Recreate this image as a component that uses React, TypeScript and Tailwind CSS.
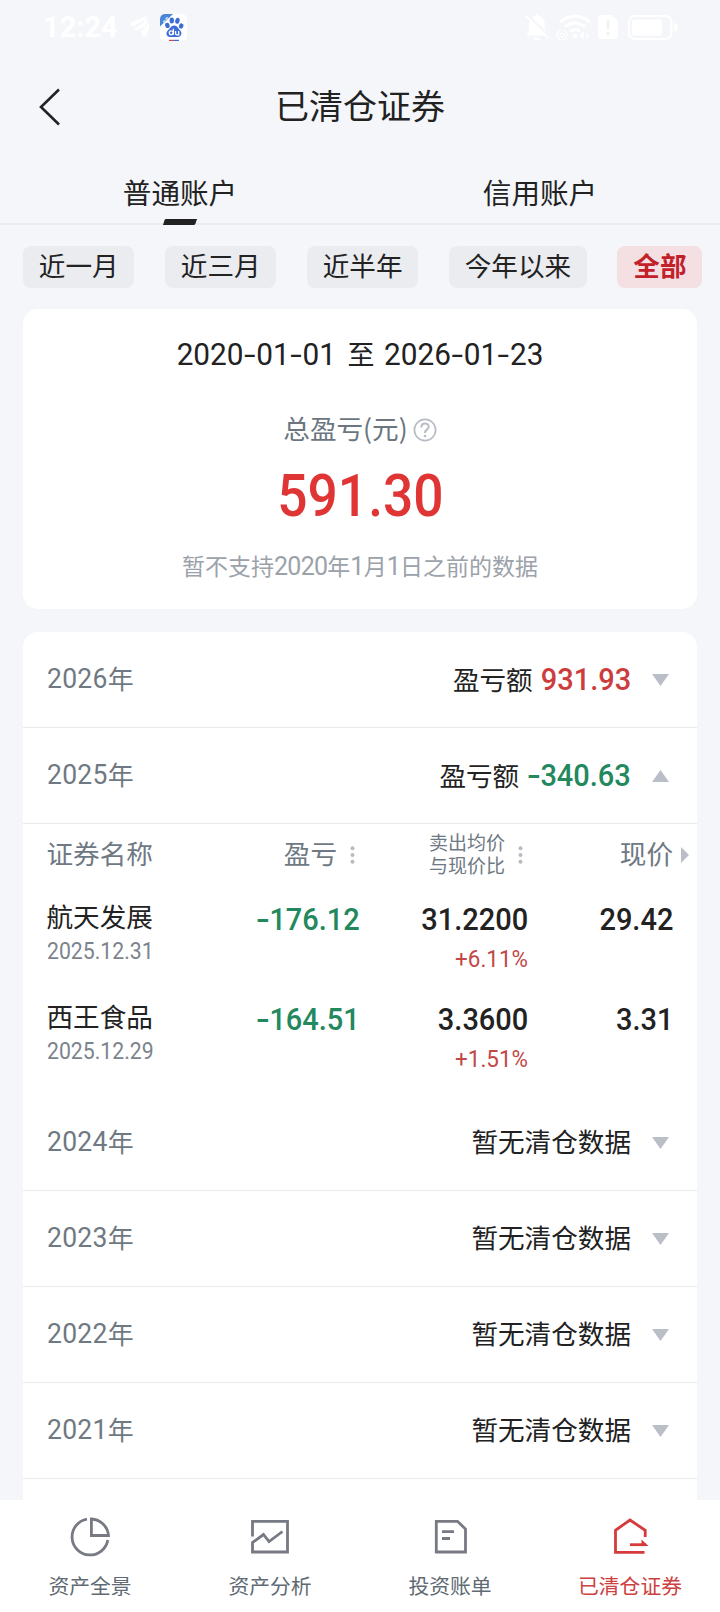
import React from "react";
import clsx from "clsx";

const CJK = "font-['Noto_Sans_CJK_SC',sans-serif]";
const DIN = "font-[Roboto,'Noto_Sans_CJK_SC',sans-serif]";

/** Condensed figures with a widened hyphen. */
function Num({ value, className }: { value: string; className?: string }) {
  return (
    <span className={clsx(DIN, "inline-block whitespace-nowrap", className)}>
      {value.split(/(-)/).map((part, i) =>
        part === "-" ? (
          <span key={i} className="inline-block w-[0.43em] text-center">
            <span className="inline-block scale-x-[1.4]">-</span>
          </span>
        ) : (
          part
        ),
      )}
    </span>
  );
}

function BaiduIcon() {
  return (
    <svg width="27" height="27" viewBox="0 0 27 27">
      <defs>
        <clipPath id="app">
          <rect width="27" height="27" rx="5" />
        </clipPath>
      </defs>
      <g clipPath="url(#app)">
        <rect width="27" height="27" fill="#fff" />
        <path d="M0 0H13L0 12.5Z" fill="#4a86d8" />
        <path d="M3.2 8.2l2-2M5.6 5.4l2-2" stroke="#cfe0f8" strokeWidth="1.6" />
        <g fill="#3b6cd8">
          <ellipse cx="11.8" cy="6.6" rx="2.2" ry="3" />
          <ellipse cx="17.4" cy="6.8" rx="2.2" ry="3" transform="rotate(12 17.4 6.8)" />
          <ellipse cx="7.4" cy="11.4" rx="2.2" ry="2.7" transform="rotate(-20 7.4 11.4)" />
          <ellipse cx="21.2" cy="12" rx="2.2" ry="2.7" transform="rotate(15 21.2 12)" />
          <path d="M14.2 11.6c3 0 4 3 6 5 2.400 2.400 1 6.400-2.200 6.400H10c-3.600 0-4.600-4.200-2.200-6.400 2.200-2 3.400-5 6.400-5Z" />
        </g>
        <g fill="none" stroke="#fff" strokeWidth="1.3">
          <circle cx="11.2" cy="18.800" r="1.900" />
          <path d="M13.400 14.800v6M15.600 17v2.600q0 1.200 1.200 1.200h1.900V17" />
        </g>
        <rect x="9" y="25.800" width="5" height="1.200" fill="#d0494f" />
        <rect x="14" y="25.800" width="5" height="1.200" fill="#3b6cd8" />
      </g>
    </svg>
  );
}

function StatusBar() {
  return (
    <div className="flex h-[54px] items-center pl-[43px] pr-[41px] text-white">
      <span className="w-[77px] whitespace-nowrap font-[Roboto,sans-serif] text-[29px] font-bold leading-none">12:24</span>
      <svg className="ml-[10px]" width="20" height="22" viewBox="0 0 20 22" fill="currentColor">
        <path d="M0 8C5 3 10 4 15 0C16.500 2 14 5 11 6C8 7.500 4 11 1 10Z" />
        <path d="M4 12.500C10 10 15 7 16 1C18.500 5 17 9.500 13 11.500C11 13 8 14 5.500 14.500Z" />
        <path d="M10 15.500C14 13.500 18 10 18 5C21 12 17 20 12.500 21.500C13 19 12 17 10 15.500Z" />
      </svg>
      <div className="ml-[10px]">
        <BaiduIcon />
      </div>
      <div className="ml-auto flex items-center">
        <svg width="24" height="27" viewBox="0 0 24 27">
          <path d="M12 0c1.500 0 2 1 2 2 4 1 5.800 4.500 5.800 8v6l3 5.500H1.200l3-5.500v-6c0-3.500 2-7 5.800-8 0-1 .5-2 2-2ZM9 24h5.500c0 3.500-5.500 3.500-5.500 0Z" fill="#fff" />
          <path d="M2 0L25 23" stroke="#f5f6fa" strokeWidth="2" />
          <path d="M.5 1.500L23 24" stroke="#fff" strokeWidth="1.800" />
        </svg>
        <svg className="ml-[7px]" width="35" height="27" viewBox="0 0 35 27" fill="none" stroke="#fff">
          <path d="M4 8.500C12 0 26 0 34 8.500" strokeWidth="3" />
          <path d="M9 13C15 7.500 23 7.500 29 13" strokeWidth="3" />
          <path d="M14 17.500C17 15 21 15 24 17.500" strokeWidth="3" />
          <circle cx="6" cy="21" r="5" strokeWidth="1.200" />
          <circle cx="6" cy="21" r="2" strokeWidth="1.200" />
          <circle cx="19" cy="22" r="2.400" fill="#fff" stroke="none" />
          <path d="M23 21.500l5-4v8Z" fill="#fff" stroke="none" />
          <path d="M30 17.500v8l4-4Z" fill="#fff" fillOpacity=".5" stroke="none" />
        </svg>
        <svg className="ml-[7px]" width="20" height="24" viewBox="0 0 20 24">
          <path d="M3.500 0H14l6 6v14.500a3.500 3.500 0 0 1-3.500 3.500h-13A3.500 3.500 0 0 1 0 20.500v-17A3.500 3.500 0 0 1 3.500 0Z" fill="#fff" />
          <path d="M10 5v9M10 17v3" stroke="#f0f1f5" strokeWidth="2.600" />
        </svg>
        <svg className="ml-[10px] mr-px" width="50" height="25" viewBox="0 0 50 25">
          <rect x="1" y="1" width="42.500" height="23" rx="6" fill="none" stroke="#fff" strokeWidth="2" />
          <rect x="4" y="4.500" width="30" height="16" rx="3" fill="#fff" />
          <path d="M46 8.500q4 0 4 4t-4 4Z" fill="#fff" />
        </svg>
      </div>
    </div>
  );
}

function Header() {
  return (
    <header className="relative flex h-[104px] items-center justify-center pb-0.5">
      <svg className="absolute left-[39px] top-[34px]" width="22" height="38" viewBox="0 0 22 38" fill="none" stroke="#222" strokeWidth="2.600">
        <path d="M20 1.500L2 19L20 36.500" />
      </svg>
      <h1 className="text-[34px] leading-none text-[#222]">已清仓证券</h1>
    </header>
  );
}

function Tabs() {
  return (
    <div className="relative flex h-[67px] border-b-2 border-[#ebecf0] text-[28.600px] leading-none text-[#222]">
      <div className="flex flex-1 justify-center pt-5">普通账户</div>
      <div className="flex flex-1 justify-center pt-5">信用账户</div>
      <svg className="absolute left-[163px] top-[61px]" width="34" height="6" viewBox="0 0 34 6">
        <path d="M3 0H34L32.500 4.500Q32 6 30.500 6H0L1.500 1.300Q2 0 3 0Z" fill="#222" />
      </svg>
    </div>
  );
}

const periods = ["近一月", "近三月", "近半年", "今年以来", "全部"];

function Periods() {
  return (
    <div className="mt-[21px] flex gap-[30.500px] pl-[23px]">
      {periods.map((p) => (
        <div
          key={p}
          className={clsx(
            "flex h-[42px] items-center whitespace-nowrap rounded-lg px-[15.850px] pb-1 text-[26.600px] leading-none",
            p === "全部" ? "bg-[#f4dfe2] font-bold text-[#c3212a]" : "bg-[#ebecf0] text-[#222]",
          )}
        >
          {p}
        </div>
      ))}
    </div>
  );
}

function Summary() {
  return (
    <section className="mx-[23px] mt-[21px] flex h-[300px] flex-col items-center rounded-[15px] bg-white">
      <div className="mt-[29px] flex h-8 items-center text-[27px] leading-none text-[#222]">
        <Num value="2020-01-01" className="origin-right scale-x-[0.96] text-[31px]" />
        <span className="-mt-0.5 ml-[11px] mr-[9px]">至</span>
        <Num value="2026-01-23" className="origin-left scale-x-[0.96] text-[31px]" />
      </div>
      <div className="mt-[42px] flex h-8 items-center text-[26.600px] leading-none text-[#6b7680]">
        总盈亏(元)
        <svg className="ml-[5px] mt-[3px]" width="24" height="24" viewBox="0 0 24 24" fill="none" stroke="#b7bcc4" strokeWidth="1.700">
          <circle cx="12" cy="12" r="10.600" />
          <path d="M8.300 9.400C8.300 4 15.800 4.400 15.700 9C15.600 11.500 12 11.400 12 15" strokeWidth="2" />
          <circle cx="12" cy="18" r="1.300" fill="#b7bcc4" stroke="none" />
        </svg>
      </div>
      <Num value="591.30" className="mt-[22px] scale-x-[0.91] text-[58.600px] font-medium leading-[60px] text-[#df3535]" />
      <div className="mt-[23px] flex h-8 items-center text-[23px] leading-none text-[#9ba2aa]">
        暂不支持
        <Num value="2020" className="mt-0.5 text-[25px] tracking-[-0.700px]" />年<Num value="1" className="mt-0.5 text-[25px] tracking-[-0.700px]" />月
        <Num value="1" className="mt-0.5 text-[25px] tracking-[-0.700px]" />日之前的数据
      </div>
    </section>
  );
}

function Caret({ up }: { up?: boolean }) {
  return (
    <svg className="ml-[21px] mr-[28px]" width="17" height="12" viewBox="0 0 17 12" fill="#b9bec7">
      {up ? <path d="M8.500 0L17 12H0Z" /> : <path d="M0 0H17L8.500 12Z" />}
    </svg>
  );
}

const figure = "scale-x-[0.92] text-[31.500px] font-medium";

function YearRow({ year, amount }: { year: string; amount?: string }) {
  const loss = amount?.startsWith("-");
  return (
    <div className="flex h-24 shrink-0 items-center border-b border-[#e9eaec] pl-[23.500px] leading-none">
      <div className="flex items-center text-[26px] text-[#6f7983]">
        <Num value={year} className="origin-left scale-x-[0.93] text-[28.500px] tracking-[0.300px]" />
        <span className="-ml-[4px] -mt-[3px]">年</span>
      </div>
      <div className="ml-auto flex items-center text-[26.600px] text-[#222]">
        {amount ? (
          <>
            <span className="-mt-px">盈亏额</span>
            <Num value={amount} className={clsx("origin-right", figure, loss ? "text-[#23885e]" : "text-[#cc3d3d]")} />
          </>
        ) : (
          <span className="-mt-0.5">暂无清仓数据</span>
        )}
      </div>
      <Caret up={loss} />
    </div>
  );
}

function Dots() {
  return (
    <svg width="5" height="18" viewBox="0 0 5 18" fill="#b7bbc1">
      <circle cx="2.500" cy="2.200" r="2" />
      <circle cx="2.500" cy="9" r="2" />
      <circle cx="2.500" cy="15.800" r="2" />
    </svg>
  );
}

const cols = "grid grid-cols-[160.500px_153px_168px_145px] pl-[23.500px]";

const holdings = [
  { name: "航天发展", date: "2025.12.31", profit: "-176.12", sell: "31.2200", pct: "+6.11%", price: "29.42" },
  { name: "西王食品", date: "2025.12.29", profit: "-164.51", sell: "3.3600", pct: "+1.51%", price: "3.31" },
];

function Holdings() {
  return (
    <div className="h-[271px] shrink-0">
      <div className={clsx(cols, "h-[61px] items-center text-[26.600px] leading-none text-[#6f7983]")}>
        <div className="-mt-[3px]">证券名称</div>
        <div className="flex items-center justify-end gap-[13px] pr-[5px]">
          <span className="-mt-[3px]">盈亏</span>
          <Dots />
        </div>
        <div className="flex items-center justify-end gap-[13px] pr-[5px]">
          <span className="-mt-[3px] text-[19px] leading-[23px]">
            <span className="block h-[23px]">卖出均价</span>
            <span className="block h-[23px]">与现价比</span>
          </span>
          <Dots />
        </div>
        <div className="-mr-4 flex items-center justify-end gap-[8px]">
          <span className="-mt-[3px]">现价</span>
          <svg width="8" height="16" viewBox="0 0 8 16" fill="#b9bec7">
            <path d="M0 0L8 8L0 16Z" />
          </svg>
        </div>
      </div>
      {holdings.map((h) => (
        <div key={h.name} className={clsx(cols, "h-[100px] leading-none text-[#222]")}>
          <div className="pt-[18px]">
            <div className="text-[26.600px]">{h.name}</div>
            <Num value={h.date} className="mt-[9px] origin-left scale-x-[0.885] text-[24px] text-[#7b848d]" />
          </div>
          <div className="flex flex-col items-end pt-[19px]">
            <Num value={h.profit} className={clsx("origin-right text-[#23885e]", figure)} />
          </div>
          <div className="flex flex-col items-end pt-[19px]">
            <Num value={h.sell} className={clsx("origin-right", figure)} />
            <Num value={h.pct} className="mt-[11px] origin-right scale-x-[0.935] text-[24px] text-[#c24848]" />
          </div>
          <div className="flex flex-col items-end pt-[19px]">
            <Num value={h.price} className={clsx("origin-right", figure)} />
          </div>
        </div>
      ))}
    </div>
  );
}

const navItems = [
  {
    label: "资产全景",
    icon: (
      <>
        <path d="M17 2.200A18 18 0 1 0 37.800 23" />
        <path d="M21.400 2V18.500H38.500A18 18 0 0 0 21.400 2Z" />
      </>
    ),
  },
  {
    label: "资产分析",
    icon: <path d="M2.500 19.500V4.300H37.500V35H2.500V25.500L13.500 17.500L19 24.500L32.500 14.500" />,
  },
  {
    label: "投资账单",
    icon: (
      <>
        <path d="M6.300 4.300H27.500L35.500 12V35H6.300Z" />
        <path d="M12 14.700H24M12 21.500H20" />
      </>
    ),
  },
  {
    label: "已清仓证券",
    active: true,
    icon: (
      <>
        <path d="M35.200 20V13.300L20 3L5.500 13.300V35.300H34.500" />
        <path d="M20 27.700H36" />
        <path d="M31.500 22.500L38.500 29H31.500Z" fill="currentColor" stroke="none" />
      </>
    ),
  },
];

function BottomNav() {
  return (
    <nav className="grid h-28 shrink-0 grid-cols-4 bg-white">
      {navItems.map((n) => (
        <div key={n.label} className={clsx("flex flex-col items-center pt-[17px]", n.active ? "text-[#d63a3d]" : "text-[#777983]")}>
          <svg width="40" height="40" viewBox="0 0 40 40" fill="none" stroke="currentColor" strokeWidth="2.800">
            {n.icon}
          </svg>
          <span className={clsx("mt-[18px] text-[20.800px] leading-none", n.active ? "text-[#cc4040]" : "text-[#5f6a73]")}>{n.label}</span>
        </div>
      ))}
    </nav>
  );
}

export default function App() {
  return (
    <div className={clsx(CJK, "flex h-[1612px] w-[720px] flex-col overflow-hidden bg-[#f5f6fa]")}>
      <StatusBar />
      <Header />
      <Tabs />
      <Periods />
      <Summary />
      <main className="mx-[23px] mt-[23px] flex min-h-0 flex-1 flex-col overflow-hidden rounded-t-[15px] bg-white">
        <YearRow year="2026" amount="931.93" />
        <YearRow year="2025" amount="-340.63" />
        <Holdings />
        <YearRow year="2024" />
        <YearRow year="2023" />
        <YearRow year="2022" />
        <YearRow year="2021" />
      </main>
      <BottomNav />
    </div>
  );
}
